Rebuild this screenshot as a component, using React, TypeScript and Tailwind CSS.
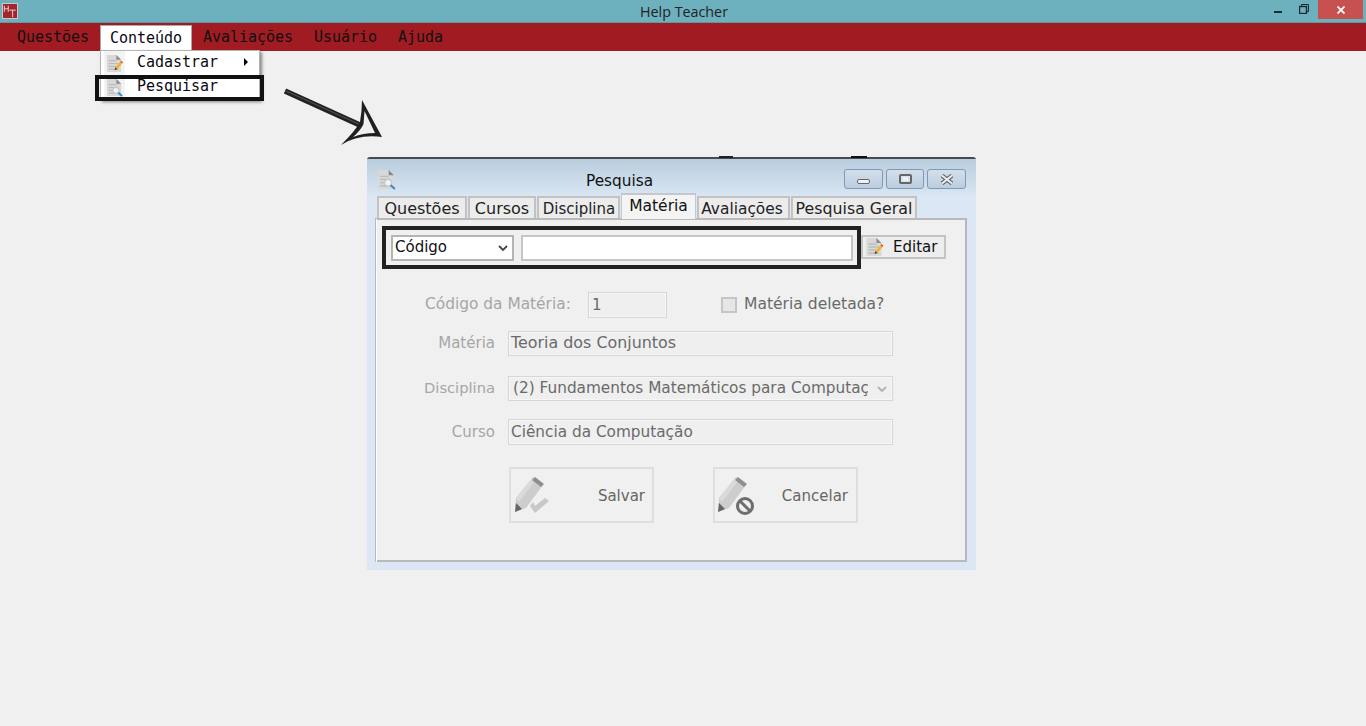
const sans = "font-['DejaVu_Sans',sans-serif]";

function DocBase({ children }: { children?: React.ReactNode }) {
  return (
    <svg viewBox="0 0 20 20" className="w-full h-full">
      <path d="M2 1h10l5 5v13H2z" fill="#d8d8d8" />
      <path d="M12 1l5 5h-5z" fill="#8a8a8a" />
      <path d="M4 7h8M4 10h10M4 13h8M4 16h10" stroke="#bcbcbc" strokeWidth="1.300" />
      {children}
    </svg>
  );
}
const DocEdit = () => (
  <DocBase>
    <path d="M10 17l1-3 5-6 2 2-5 6z" fill="#f0b429" />
    <path d="M16 8l1-1 2 2-1 1z" fill="#d8443c" />
    <path d="M10 17l1-3 2 2z" fill="#444" />
  </DocBase>
);
const DocSearch = () => (
  <DocBase>
    <circle cx="11.500" cy="13" r="3.200" fill="#eef3f6" stroke="#c0c8ce" strokeWidth="1.200" />
    <path d="M14 15.500l4 3.500" stroke="#2f8fc4" strokeWidth="2" />
  </DocBase>
);
const Chevron = ({ color }: { color: string }) => (
  <svg viewBox="0 0 10 6" className="w-[10px] h-[6px]">
    <path d="M1 1l4 4 4-4" fill="none" stroke={color} strokeWidth="1.800" />
  </svg>
);
const Pencil = () => (
  <g>
    <path d="M5 29L22 8l10 8-17 23-11 4z" fill="#cdcdcd" />
    <path d="M5 29L22 8l3 2.500L8 33z" fill="#dadada" />
    <path d="M21 11l3-3 9 7-3 3z" fill="#8f8f8f" />
    <path d="M4 43l1-9 6 6z" fill="#666" />
  </g>
);

function Field({ children, className }: { children: React.ReactNode; className: string }) {
  return (
    <div className={`border border-[#d6d6d6] shadow-[inset_0_0_0_1px_#f7f7f7] bg-[#efefef] flex items-center text-[#6a6a6a] ${className}`}>
      {children}
    </div>
  );
}

function Tab({ label, w, text, active }: { label: string; w: string; text: string; active?: boolean }) {
  return active ? (
    <div className={`${w} ${text} h-[26px] -mb-px bg-[#f4f4f4] border-t-2 border-x border-[#c4c8cc] text-center leading-[23px] text-[#111] z-10`}>
      {label}
    </div>
  ) : (
    <div className={`${w} ${text} h-[22px] bg-[#ececec] border-2 border-b-0 border-[#c2c2c2] text-center leading-[22px] text-[#222] whitespace-nowrap`}>
      {label}
    </div>
  );
}

function WinBtn({ children, w }: { children: React.ReactNode; w: string }) {
  return (
    <div className={`${w} h-[20px] rounded-[3px] border border-[#7f99b8] bg-gradient-to-b from-[#d3dfeb] to-[#bccddf] flex items-center justify-center`}>
      {children}
    </div>
  );
}

function Row({ label, children, mb, lift }: { label: string; children: React.ReactNode; mb: string; lift: string }) {
  return (
    <div className={`flex items-center ${mb}`}>
      <div className={`w-[106px] text-right text-[#a6a6a6] leading-[18px] ${lift}`}>{label}</div>
      <div className="ml-[13px]">{children}</div>
    </div>
  );
}

const menu = [
  { t: "Questões", c: "h-[26px] px-[10px] leading-[24px]" },
  { t: "Conteúdo", c: "h-[26px] px-[9px] mx-px bg-white border border-b-0 border-[#a9a9a9] leading-[24px] text-[#0a0a14] z-10" },
  { t: "Avaliações", c: "h-[26px] px-[10px] leading-[24px]" },
  { t: "Usuário", c: "h-[26px] pl-[11px] pr-[11px] leading-[24px]" },
  { t: "Ajuda", c: "h-[26px] px-[10px] leading-[24px]" },
];

export default function App() {
  return (
    <div className="relative w-[1366px] h-[726px] overflow-hidden bg-[#f0f0f0]">
      {/* Title bar */}
      <div className="relative h-[23px] bg-[#6db0be] border-b border-[#5f98a4] flex items-start">
        <div className="ml-[2px] mt-[3px] w-[16px] h-[16px] bg-[#a3262c] border border-[#c9c9c9]">
          <svg viewBox="0 0 16 16" className="w-full h-full">
            <path d="M1.500 2v7M6 2v7M1.500 5.500H6M7.500 7h7M11 7v8" stroke="#f2e6e6" strokeWidth="1" fill="none" />
          </svg>
        </div>
        <div className="absolute left-[640px] top-[3px] font-['Open_Sans',sans-serif] text-[14.300px] leading-[18px] text-[#222]">Help Teacher</div>
        <div className="ml-auto flex items-start">
          <div className="w-[8px] h-[2px] bg-[#1f2a30] mt-[11px] mr-[17px]" />
          <svg viewBox="0 0 10 10" className="w-[10px] h-[10px] mt-[4px] mr-[9px]">
            <path d="M2.500 2.500V.5h7v7h-2" fill="none" stroke="#1f2a30" strokeWidth="1" />
            <rect x="0.500" y="2.500" width="7" height="7" fill="none" stroke="#1f2a30" strokeWidth="1.400" />
          </svg>
          <div className="w-[45px] h-[19px] bg-[#c75050] mr-[3px] flex items-center justify-center">
            <svg viewBox="0 0 8 8" className="w-[8px] h-[8px]">
              <path d="M.5.5l7 7M7.500.5l-7 7" stroke="#fff" strokeWidth="1.800" />
            </svg>
          </div>
        </div>
      </div>

      {/* Menu bar */}
      <div className="h-[28px] bg-[#a01c22] flex items-end pl-[7px] font-['DejaVu_Sans_Mono',monospace] text-[15px] tracking-[-0.03px] text-[#111]">
        {menu.map((m) => (
          <div key={m.t} className={m.c}>{m.t}</div>
        ))}
      </div>

      {/* Dropdown menu */}
      <div className="absolute left-[100px] top-[50px] w-[160px] h-[50px] bg-white border border-[#b5b5b5] shadow-[2px_2px_3px_rgba(0,0,0,0.45)] font-['DejaVu_Sans_Mono',monospace] text-[15px] tracking-[-0.03px] text-[#0a0a14] z-20">
        <div className="flex items-center h-[24px]">
          <div className="w-[21px] h-[24px] ml-[3px] pt-[1px] px-[1px] bg-[#f3f3f3]"><DocEdit /></div>
          <span className="ml-[12px] -mt-[2px]">Cadastrar</span>
          <span className="ml-[26px] -mt-[2px] w-0 h-0 border-y-[4px] border-y-transparent border-l-[4px] border-l-black" />
        </div>
        <div className="flex items-center h-[24px]">
          <div className="w-[21px] h-[24px] ml-[3px] pt-[1px] px-[1px] bg-[#f3f3f3]"><DocSearch /></div>
          <span className="ml-[12px] -mt-[2px]">Pesquisar</span>
        </div>
      </div>
      <div className="absolute left-[95px] top-[75px] w-[169px] h-[26px] border-4 border-[#111] z-30" />

      {/* Arrow annotation */}
      <svg className="absolute left-[280px] top-[85px] w-[110px] h-[65px]" viewBox="280 85 110 65">
        <path d="M285 91l77 35" stroke="#222" strokeWidth="5.500" />
        <path d="M286 91l76 34.500" stroke="#777" strokeWidth="0.600" />
        <path d="M362 100L382 137Q358 134 341 145Q356 130 360 122Q362 110 362 100Z" fill="#1f1f1f" />
        <path d="M364.500 111L375 133Q363 133 353 137Q361 130 363.500 124Z" fill="#f0f0f0" />
      </svg>

      {/* Dialog window */}
      <div className={`absolute left-[367px] top-[157px] w-[609px] h-[413px] ${sans} bg-[#dbe7f4] border-t-2 border-[#4a4a4a] rounded-t-[3px]`}>
        <span className="absolute left-[352px] -top-[3px] w-[14px] h-[2px] bg-[#222]" />
        <span className="absolute left-[484px] -top-[3px] w-[16px] h-[2px] bg-[#111]" />
        {/* Header */}
        <div className="relative h-[37px] bg-gradient-to-b from-[#b9cddd] to-[#d9e6f3] flex items-start">
          <div className="w-[21px] h-[21px] ml-[9px] mt-[10px]"><DocSearch /></div>
          <div className="absolute left-[219px] top-[12px] text-[15.300px] leading-[20px] text-[#111]">Pesquisa</div>
          <div className="ml-auto flex gap-[3px] mt-[10px] mr-[10px]">
            <WinBtn w="w-[39px]"><div className="w-[13px] h-[5px] border-[1.5px] border-[#666] rounded-[2px] bg-[#eef2f6] mt-[4px]" /></WinBtn>
            <WinBtn w="w-[38px]">
              <div className="w-[13px] h-[10px] border-2 border-[#666] rounded-[2px] bg-[#d8e2ec] flex items-center justify-center"><div className="w-[5px] h-[4px] bg-[#eef2f6]" /></div>
            </WinBtn>
            <WinBtn w="w-[39px]">
              <svg viewBox="0 0 14 11" className="w-[14px] h-[11px]">
                <path d="M2 1.500l10 8M12 1.500l-10 8" stroke="#666" strokeWidth="4.200" />
                <path d="M2 1.500l10 8M12 1.500l-10 8" stroke="#eceff2" strokeWidth="2" />
              </svg>
            </WinBtn>
          </div>
        </div>
        {/* Tabs */}
        <div className="flex items-end h-[22px] mx-[8px] pl-[3px] gap-px">
          <Tab label="Questões" w="w-[90px] -ml-px" text="text-[16px]" />
          <Tab label="Cursos" w="w-[68px]" text="text-[16px]" />
          <Tab label="Disciplina" w="w-[83px] pl-[1px]" text="text-[15px]" />
          <Tab label="Matéria" w="w-[75px]" text="text-[15.500px]" active />
          <Tab label="Avaliações" w="w-[93px] pr-[3px]" text="text-[15.400px]" />
          <Tab label="Pesquisa Geral" w="w-[126px]" text="text-[15.800px]" />
        </div>
        {/* Panel */}
        <div className="relative mx-[8px] w-[592px] h-[344px] bg-[#f0f0f0] border-2 border-[#b9b9b9] pl-[14px] pt-[15px]">
          <div className="absolute -left-[1px] top-[-1px] w-px h-[343px] bg-white" />
          <div className="flex items-start">
            <div className="w-[123px] h-[26px] bg-white border-2 border-[#b5b5b5] flex items-center justify-between pl-[2px] pr-[4px] text-[15px] text-[#111]">
              <span className="-mt-[2px]">Código</span>
              <Chevron color="#444" />
            </div>
            <div className="w-[332px] h-[26px] ml-[7px] bg-white border-2 border-[#c6c6c6]" />
            <div className="w-[85px] h-[24px] ml-[8px] bg-[#ededed] border-2 border-[#c4c4c4] flex items-center pl-[1px] text-[15px] text-[#111]">
              <div className="w-[21px] h-[20px]"><DocEdit /></div>
              <span className="ml-[8px]">Editar</span>
            </div>
          </div>

          <div className="flex items-center mt-[31px] ml-[34px]">
            <span className="w-[146px] text-[15.400px] text-[#a6a6a6] whitespace-nowrap">Código da Matéria:</span>
            <Field className="w-[79px] h-[26px] ml-[17px] pl-[3px] text-[15px]">1</Field>
            <div className="w-[16px] h-[16px] ml-[54px] border-2 border-[#c6c6c6] bg-[#e6e6e6]" />
            <span className="ml-[7px] text-[15.550px] text-[#6a6a6a] whitespace-nowrap">Matéria deletada?</span>
          </div>

          <div className="-ml-[2px] mt-[13px]">
            <Row label="Matéria" mb="mb-[20px]" lift="text-[15px] -mt-[2px]">
              <Field className="w-[385px] h-[25px] pl-[2px] pb-[2px] text-[15.900px]">Teoria dos Conjuntos</Field>
            </Row>
            <Row label="Disciplina" mb="mb-[18px]" lift="text-[14.700px] -mt-[2px]">
              <Field className="w-[385px] h-[25px] pl-[4px] pr-[5px] justify-between whitespace-nowrap text-[15.300px]">
                <span className="w-[355px] overflow-hidden">(2) Fundamentos Matemáticos para Computação</span>
                <Chevron color="#b0b0b0" />
              </Field>
            </Row>
            <Row label="Curso" mb="mb-[22px]" lift="text-[15px]">
              <Field className="w-[385px] h-[26px] pl-[2px] text-[15.300px]">Ciência da Computação</Field>
            </Row>
          </div>

          <div className="flex ml-[118px] gap-[59px] text-[15px] text-[#666]">
            <div className="relative w-[145px] h-[56px] border-2 border-[#dedede] flex items-center justify-end pr-[7px] pt-[2px]">
              <svg viewBox="0 0 60 52" className="absolute left-0 top-0 w-[60px] h-[52px]">
                <Pencil />
                <path d="M19 37l3-4 2 4 10-8 4 3-14 12z" fill="#c8c8c8" />
              </svg>
              Salvar
            </div>
            <div className="relative w-[145px] h-[56px] border-2 border-[#dedede] flex items-center justify-end pr-[8px] pt-[2px]">
              <svg viewBox="0 0 60 52" className="absolute left-0 top-0 w-[60px] h-[52px]">
                <g transform="translate(-1 0)"><Pencil /></g>
                <circle cx="30" cy="37" r="7.500" fill="#f0f0f0" stroke="#6e6e6e" strokeWidth="3" />
                <path d="M25 32l10 10" stroke="#6e6e6e" strokeWidth="3" />
              </svg>
              Cancelar
            </div>
          </div>
        </div>
      </div>

      {/* Highlight over the search row */}
      <div className="absolute left-[382px] top-[226px] w-[479px] h-[43px] border-4 border-[#222] z-30" />
    </div>
  );
}
